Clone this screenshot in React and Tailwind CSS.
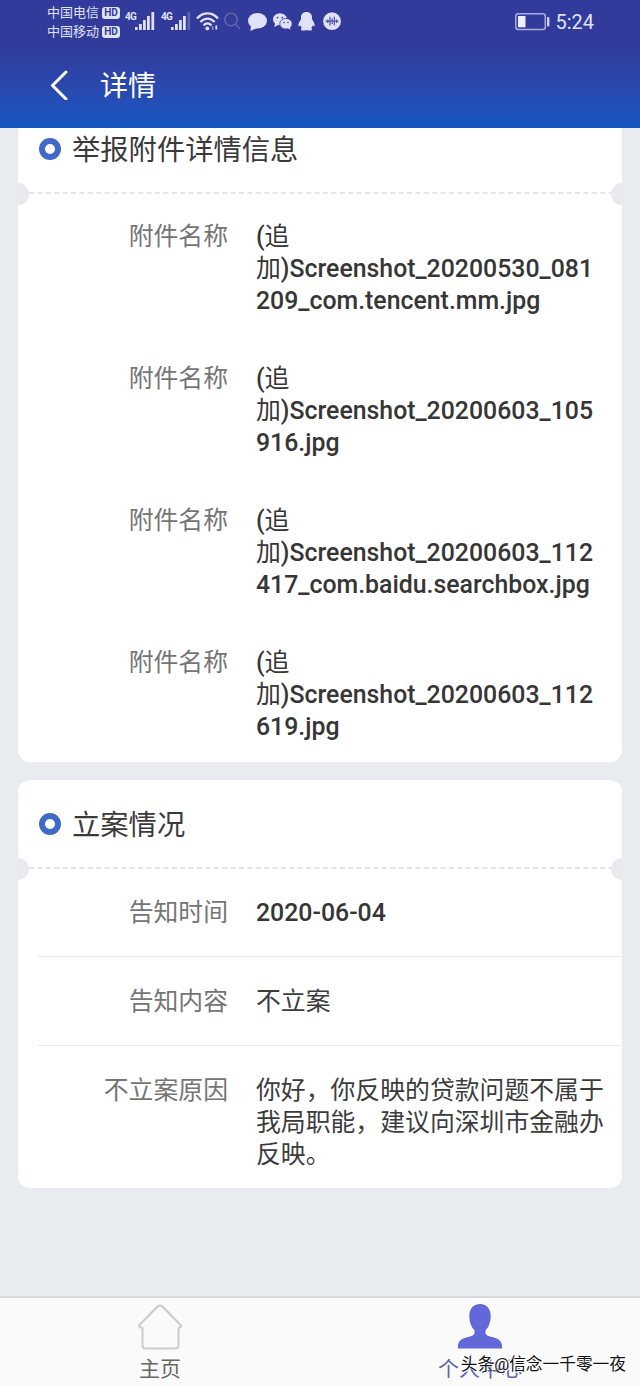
import React from 'react';

const attachments = [
  ['(', '追加', ')Screenshot_20200530_081209_com.tencent.mm.jpg'],
  ['(', '追加', ')Screenshot_20200603_105916.jpg'],
  ['(', '追加', ')Screenshot_20200603_112417_com.baidu.searchbox.jpg'],
  ['(', '追加', ')Screenshot_20200603_112619.jpg'],
];

const results = [
  { label: '告知时间', value: '2020-06-04', medium: true },
  { label: '告知内容', value: '不立案' },
  { label: '不立案原因', value: '你好，你反映的贷款问题不属于我局职能，建议向深圳市金融办反映。' },
];

function Carrier({ name }) {
  return (
    <div className="flex h-[19px] items-center gap-[3px]">
      <span className="text-[13px] leading-[19px]">{name}</span>
      <span className="flex h-[12px] w-[18px] items-center justify-center rounded-[3px] bg-[#dfe2f8] text-[10px] leading-none font-bold text-[#323a9b]">HD</span>
    </div>
  );
}

function Signal({ weak }) {
  return (
    <div className="flex w-[30px] items-start">
      <span className="-mt-[1px] w-[10px] text-[10px] leading-[11px] font-bold tracking-[-0.8px]">4G</span>
      <svg width="20" height="19" viewBox="0 0 20 19" fill="currentColor">
        <rect x="0" y="15" width="2.6" height="3" />
        <rect x="4" y="12" width="2.8" height="6" />
        <rect x="8" y="8" width="2.8" height="10" />
        <rect x="12" y="4" width="2.8" height="14" />
        <rect x="16.4" y="0" width="2.8" height="18" opacity={weak ? 0.25 : 1} />
      </svg>
    </div>
  );
}

function StatusBar() {
  return (
    <div className="flex h-[44px] pr-[46px] pl-[47px] text-[#dfe2f8]">
      <div className="w-[78px] pt-[3px]">
        <Carrier name="中国电信" />
        <Carrier name="中国移动" />
      </div>
      <div className="flex h-[19px] flex-1 pt-[12px]">
        <div className="mr-[6px]"><Signal /></div>
        <div className="mr-[5px]"><Signal weak /></div>
        <svg className="mr-[5px]" width="23" height="19" viewBox="0 0 23 19" fill="none" stroke="currentColor" strokeWidth="2.3">
          <path d="M1 6.5C7 -0.3 16 -0.3 22 6.5" />
          <path d="M4.4 10C8.6 5.4 14.4 5.4 18.6 10" />
          <path d="M7.6 13.4C10 10.8 13 10.8 15.4 13.4" />
          <circle cx="11.3" cy="16.4" r="1.9" fill="currentColor" stroke="none" />
          <path d="M16.6 14v4" strokeWidth="1.6" opacity="0.5" />
          <path d="M20.3 13.5v4" strokeWidth="1.8" />
        </svg>
        <svg className="mr-[7px] text-[#5f63a6]" width="17" height="18" viewBox="0 0 17 18" fill="none" stroke="currentColor" strokeWidth="1.6">
          <circle cx="7" cy="7.5" r="6.2" />
          <path d="M11.3 12l4.600 4.700" />
        </svg>
        <svg className="mr-[6px]" width="19" height="19" viewBox="0 0 19 19" fill="currentColor">
          <ellipse cx="9.5" cy="8.8" rx="9.5" ry="7.8" />
          <path d="M3 13l-.6 6 6.600-3z" />
        </svg>
        <svg className="mr-[6px]" width="19" height="19" viewBox="0 0 19 19" fill="currentColor">
          <ellipse cx="7" cy="7.200" rx="7" ry="6" />
          <path d="M2 11l-.6 4 4.400-2.200z" />
          <ellipse cx="13" cy="11.800" rx="6.200" ry="5.300" stroke="#323a9b" strokeWidth="0.8" />
          <path d="M14 15.500l3.300 2.200-.4-3.500z" />
          <g fill="#323a9b">
            <circle cx="4.500" cy="5.600" r="0.9" />
            <circle cx="9.300" cy="5.600" r="0.9" />
            <circle cx="11" cy="10.500" r="0.8" />
            <circle cx="15" cy="10.500" r="0.8" />
          </g>
        </svg>
        <svg className="mr-[8px]" width="17" height="19" viewBox="0 0 17 19" fill="currentColor">
          <path d="M8.500 0C4.800 0 3 2.400 3 5.500v1.800C1.400 9.500.1 12.200.4 14c.2.800 1.100.3 1.900-.7.300 1.200.8 2 1.500 2.700-1.300.6-1.200 2.500.7 2.600 1.700.1 3.200-.2 4-.6.8.4 2.300.7 4 .6 1.900-.1 2-2 .7-2.600.7-.7 1.200-1.500 1.500-2.700.8 1 1.700 1.500 1.900.7.300-1.800-1-4.500-2.600-6.700V5.500C14 2.400 12.200 0 8.500 0z" />
        </svg>
        <svg width="18" height="19" viewBox="0 0 18 19">
          <circle cx="9" cy="9.200" r="8.900" fill="currentColor" />
          <path d="M2.500 9.200h13M4.800 7.500v3.400M7 4.800v8.800M9.200 6.500v5.400M11.400 4.800v8.800M13.600 7.500v3.400" stroke="#4a50a8" strokeWidth="1.2" />
        </svg>
      </div>
      <svg className="mt-[13px] mr-[5px]" width="35" height="18" viewBox="0 0 35 18" fill="none">
        <rect x="0.800" y="0.800" width="29.500" height="15.700" rx="2.500" stroke="#a9aedd" strokeWidth="1.500" />
        <rect x="3" y="3" width="7.500" height="11.300" fill="#eef0ff" />
        <rect x="32" y="4" width="2.400" height="9.500" rx="0.800" fill="#cdd1f1" />
      </svg>
      <span className="mt-[10px] text-[20px] leading-[24px]">5:24</span>
    </div>
  );
}

function CardTitle({ children }) {
  return (
    <div className="relative flex h-[88px] items-center border-b-2 border-transparent pl-[21px]">
      <span className="mt-[2px] h-[22px] w-[22px] rounded-full border-[6px] border-[#4169c8]" />
      <h2 className="ml-[11px] pt-[5px] text-[28.3px] leading-[40px] text-[#3a3a3a]">{children}</h2>
      <svg className="absolute bottom-[-3px] left-[11px]" width="582" height="2">
        <path d="M0 1h582" stroke="#dcdddf" strokeWidth="1.500" strokeDasharray="5 3.400" />
      </svg>
      <span className="absolute bottom-[-14px] left-[-11px] h-[22px] w-[22px] rounded-full bg-[#e8eaf0]" />
      <span className="absolute right-[-11px] bottom-[-14px] h-[22px] w-[22px] rounded-full bg-[#e8eaf0]" />
    </div>
  );
}

function Row({ label, children, medium }) {
  return (
    <div className="flex text-[24.85px] leading-[32px]">
      <div className="w-[190px] shrink-0 text-right text-[#757575]">{label}</div>
      <div className={medium ? 'ml-[28px] w-[350px] font-medium break-words text-[#363636]' : 'ml-[28px] w-[350px] text-[#3c3c3c]'}>
        {children}
      </div>
    </div>
  );
}

function App() {
  return (
    <div className="relative flex h-[1386px] w-[640px] flex-col overflow-hidden bg-[#e8ebf0] font-[Roboto,'Noto_Sans_CJK_SC',sans-serif]">
      <header className="relative z-10 h-[128px] shrink-0 bg-linear-to-b from-[#323a9b] from-35% to-[#1955bf] to-95%">
        <StatusBar />
        <div className="flex h-[82px] items-center pl-[50px] text-white">
          <svg width="20" height="30" viewBox="0 0 20 30" fill="none" stroke="currentColor" strokeWidth="3" strokeLinecap="round" strokeLinejoin="round">
            <path d="M16 2L2.500 15.500 16 29" />
          </svg>
          <h1 className="ml-[30px] pt-[3px] text-[28px] leading-[40px]">详情</h1>
        </div>
      </header>

      <main className="flex-1 overflow-hidden px-[18px]">
        <section className="-mt-[23px] h-[657px] overflow-hidden rounded-[12px] bg-white">
          <CardTitle>举报附件详情信息</CardTitle>
          <div className="flex flex-col gap-[46px] pt-[28px] pl-[20px]">
            {attachments.map(([open, tag, name]) => (
              <Row key={name} label="附件名称" medium>
                {open}<span className="font-normal">{tag[0]}<br />{tag[1]}</span><span className="break-all">{name}</span>
              </Row>
            ))}
          </div>
        </section>

        <section className="mt-[18px] h-[408px] overflow-hidden rounded-[12px] bg-white">
          <CardTitle>立案情况</CardTitle>
          <div className="ml-[20px] divide-y divide-[#e7e7e9]">
            {results.map((item) => (
              <div key={item.label} className="pt-[29px] pb-[27px]">
                <Row label={item.label} medium={item.medium}>{item.value}</Row>
              </div>
            ))}
          </div>
        </section>
      </main>

      <nav className="flex h-[90px] shrink-0 border-t-2 border-[#d9dadd] bg-[#fafafa] text-[21px] leading-[28px]">
        <div className="flex flex-1 flex-col items-center pt-[6px] text-[#666]">
          <svg width="46" height="46" viewBox="0 0 46 46" fill="none" stroke="#cccccc" strokeWidth="2" strokeLinejoin="round">
            <path d="M20.800 2.300Q23 .6 25.200 2.300L44 21.500Q44.300 23.400 41.500 24V41.500Q41.500 44.500 38.500 44.500H8.500Q5.500 44.500 5.500 41.500V24Q1.700 23.400 2 21.500Z" />
          </svg>
          <span className="mt-[5px]">主页</span>
        </div>
        <div className="flex flex-1 flex-col items-center pt-[6px] text-[#5c62ad]">
          <svg width="46" height="46" viewBox="0 0 46 46" fill="#6268da">
            <path d="M23 0C16 0 12.300 5 12.300 12C12.300 18 14 22.500 17.500 26.500V28.500C17.500 31 15.500 32 9 33.500C3 35 .8 38 .8 44.500H45.200C45.200 38 43 35 37 33.500C30.500 32 28.500 31 28.500 28.500V26.500C32 22.500 33.700 18 33.700 12C33.700 5 30 0 23 0Z" />
          </svg>
          <span className="mt-[5px]">个人中心</span>
        </div>
      </nav>

      <div className="absolute right-[14px] bottom-[8px] text-[16.700px] leading-[26px] whitespace-nowrap text-[#111] [text-shadow:1px_1px_0_#fff,-1px_-1px_0_#fff]">
        头条@信念一千零一夜
      </div>
    </div>
  );
}

export default App;
